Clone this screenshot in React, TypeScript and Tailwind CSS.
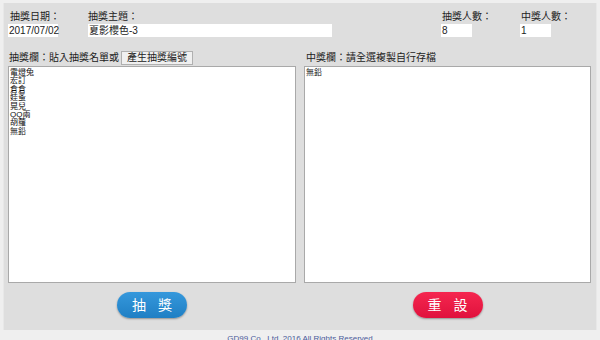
const names = ["電燈兔", "宏訂", "倉倉", "娃蚤", "晃兒", "QQ兩", "胡蘿", "無鉛"];

export default function App() {
  return (
    <div
      className="w-[600px] h-[340px] bg-[#efefef] overflow-hidden pt-[3px] px-[3px] text-[#222]"
      style={{ fontFamily: '"Liberation Sans", "Noto Sans CJK TC", sans-serif' }}
    >
      <div className="h-[327px] bg-[#dedede] border-x border-[#e8e8e8] px-[4px] pt-[8px]">
        {/* top fields */}
        <div className="flex text-[10px] leading-[12px]">
          <div className="w-[80px]">
            <div className="pl-[2px]">抽獎日期：</div>
            <div className="mt-[1px] w-[50px] h-[13px] leading-[13px] bg-white pl-[1px]">2017/07/02</div>
          </div>
          <div className="w-[353px]">
            <div>抽獎主題：</div>
            <div className="mt-[1px] w-[244px] h-[13px] leading-[13px] bg-white pl-[1px]">夏影櫻色-3</div>
          </div>
          <div className="w-[79px]">
            <div className="pl-[1px]">抽獎人數：</div>
            <div className="mt-[1px] w-[31px] h-[13px] leading-[13px] bg-white pl-[1px]">8</div>
          </div>
          <div>
            <div className="pl-[1px]">中獎人數：</div>
            <div className="mt-[1px] w-[31px] h-[13px] leading-[13px] bg-white pl-[1px]">1</div>
          </div>
        </div>

        {/* lists */}
        <div className="flex gap-[8px] mt-[14px]">
          <div className="w-[288px]">
            <div className="flex items-end h-[14px] text-[10px] leading-[12px]">
              <span className="pl-[1px] pb-[1px]">抽獎欄：貼入抽獎名單或</span>
              <button className="ml-[2px] h-[14px] w-[72px] bg-[#f0f0f0] border border-[#b0b0b0] text-[10px] leading-[12px]">
                產生抽獎編號
              </button>
            </div>
            <div className="mt-[1px] h-[217px] bg-white border border-[#a9a9a9] px-[1px] pt-[2px] text-[8px] leading-[8.4px] text-[#111]">
              {names.map((n) => (
                <div key={n}>{n}</div>
              ))}
            </div>
          </div>
          <div className="w-[287px]">
            <div className="flex items-end h-[14px] text-[10px] leading-[12px]">
              <span className="pl-[2px] pb-[1px]">中獎欄：請全選複製自行存檔</span>
            </div>
            <div className="mt-[1px] h-[217px] bg-white border border-[#a9a9a9] px-[1px] pt-[2px] text-[8px] leading-[8.4px] text-[#111]">
              無鉛
            </div>
          </div>
        </div>

        {/* buttons */}
        <div className="flex gap-[8px] mt-[9px]">
          <div className="w-[288px] flex justify-center">
            <button className="w-[70px] h-[26px] rounded-full bg-gradient-to-b from-[#3598dc] to-[#1f7fc4] shadow-[0_1px_2px_rgba(0,0,0,0.35)] text-white text-[14px] tracking-[12px] pl-[12px]">
              抽獎
            </button>
          </div>
          <div className="w-[287px] flex justify-center">
            <button className="w-[70px] h-[26px] rounded-full bg-gradient-to-b from-[#f5264f] to-[#e0103d] shadow-[0_1px_2px_rgba(0,0,0,0.35)] text-white text-[14px] tracking-[12px] pl-[12px]">
              重設
            </button>
          </div>
        </div>
      </div>
      <div className="text-center text-[8px] leading-[10px] mt-[4px] text-[#4a5a9a]">
        GD99 Co., Ltd. 2016 All Rights Reserved
      </div>
    </div>
  );
}
